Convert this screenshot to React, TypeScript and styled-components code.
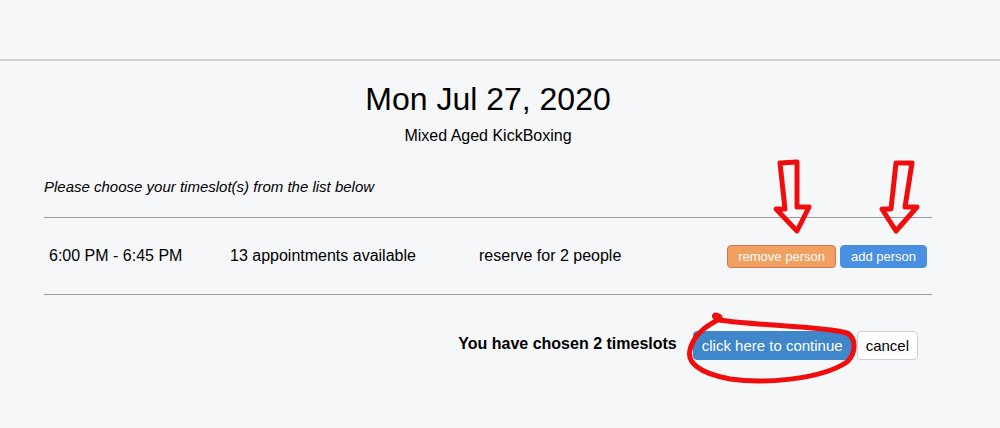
import { createGlobalStyle, styled } from 'styled-components';

const GlobalStyle = createGlobalStyle`
  html, body {
    margin: 0;
    padding: 0;
    background: #f6f7f9;
  }
  body {
    font-family: "Liberation Sans", Arial, Helvetica, sans-serif;
    color: #000;
  }
`;

const Page = styled.div`
  position: relative;
  width: 1000px;
  height: 428px;
  overflow: hidden;
  background: #f6f7f9;
`;

const TopBar = styled.div`
  height: 59px;
  border-bottom: 2px solid #d0d0d4;
`;

const Content = styled.div`
  width: 888px;
  margin-left: 44px;
  display: flex;
  flex-direction: column;
`;

const Title = styled.h1`
  margin: 20px 0 0;
  font-size: 32px;
  line-height: 36px;
  font-weight: 400;
  text-align: center;
`;

const Subtitle = styled.div`
  margin-top: 10px;
  font-size: 16px;
  line-height: 18px;
  text-align: center;
`;

const Instruction = styled.p`
  margin: 34px 0 0;
  font-size: 15px;
  line-height: 16px;
  font-style: italic;
`;

const SlotList = styled.div`
  margin-top: 22px;
  border-top: 1px solid #9a9a9a;
  border-bottom: 1px solid #9a9a9a;
`;

const SlotRow = styled.div`
  height: 76px;
  display: grid;
  grid-template-columns: 181px 249px 1fr auto;
  align-items: center;
  padding: 0 5px;
  font-size: 16px;
`;

const ButtonGroup = styled.div`
  display: flex;
  gap: 4px;
`;

const SmallButton = styled.button<{ $variant: 'remove' | 'add' }>`
  height: 23px;
  padding: 0 10px;
  border-radius: 4px;
  font-family: inherit;
  font-size: 13px;
  color: #fff;
  border: 1px solid ${({ $variant }) => ($variant === 'remove' ? '#df6e5f' : '#4a90e2')};
  background: ${({ $variant }) => ($variant === 'remove' ? '#f0a060' : '#4a90e2')};
  cursor: pointer;
`;

const Footer = styled.div`
  margin-top: 36px;
  display: flex;
  justify-content: flex-end;
  align-items: center;
  padding-right: 14px;
`;

const ChosenText = styled.span`
  font-size: 16px;
  font-weight: 700;
  margin-right: 16px;
  margin-top: -3px;
`;

const ActionButton = styled.button<{ $primary?: boolean }>`
  height: 29px;
  padding: 0 ${({ $primary }) => ($primary ? '8px' : '8px')};
  border-radius: 4px;
  font-family: inherit;
  font-size: 15px;
  color: ${({ $primary }) => ($primary ? '#fff' : '#000')};
  background: ${({ $primary }) => ($primary ? '#3f86cb' : '#fff')};
  border: 1px solid ${({ $primary }) => ($primary ? '#3f86cb' : '#cfcfcf')};
  margin-left: ${({ $primary }) => ($primary ? '0' : '5px')};
  cursor: pointer;
`;

const Annotations = styled.svg`
  position: absolute;
  top: 0;
  left: 0;
  pointer-events: none;
`;

const Markup = () => (
  <Annotations width="1000" height="428" viewBox="0 0 1000 428">
    <defs>
      <filter id="soft" x="-10%" y="-10%" width="120%" height="120%">
        <feGaussianBlur stdDeviation="0.6" />
      </filter>
    </defs>
    <g fill="none" stroke="#f01010" strokeWidth="5" strokeLinejoin="round" strokeLinecap="round" filter="url(#soft)">
      <path d="M780,163 L797,162 L797,207 L809,207 L797,231 L776,209 L785,209 Z" />
      <path d="M896,163 L912,163 L905,207 L917,207 L896,231 L882,209 L891,209 Z" />
      <path d="M720,317 C715,313 711,316 719,320 C760,326 822,326 847,333 C857,339 856,353 847,362 C820,380 762,384 730,379 C698,373 687,362 690,350 C693,336 705,326 720,319" />
    </g>
  </Annotations>
);

const App = () => {
  return (
    <Page>
      <GlobalStyle />
      <TopBar />
      <Content>
        <Title>Mon Jul 27, 2020</Title>
        <Subtitle>Mixed Aged KickBoxing</Subtitle>
        <Instruction>Please choose your timeslot(s) from the list below</Instruction>
        <SlotList>
          <SlotRow>
            <span>6:00 PM - 6:45 PM</span>
            <span>13 appointments available</span>
            <span>reserve for 2 people</span>
            <ButtonGroup>
              <SmallButton $variant="remove">remove person</SmallButton>
              <SmallButton $variant="add">add person</SmallButton>
            </ButtonGroup>
          </SlotRow>
        </SlotList>
        <Footer>
          <ChosenText>You have chosen 2 timeslots</ChosenText>
          <ActionButton $primary>click here to continue</ActionButton>
          <ActionButton>cancel</ActionButton>
        </Footer>
      </Content>
      <Markup />
    </Page>
  );
};

export default App;
